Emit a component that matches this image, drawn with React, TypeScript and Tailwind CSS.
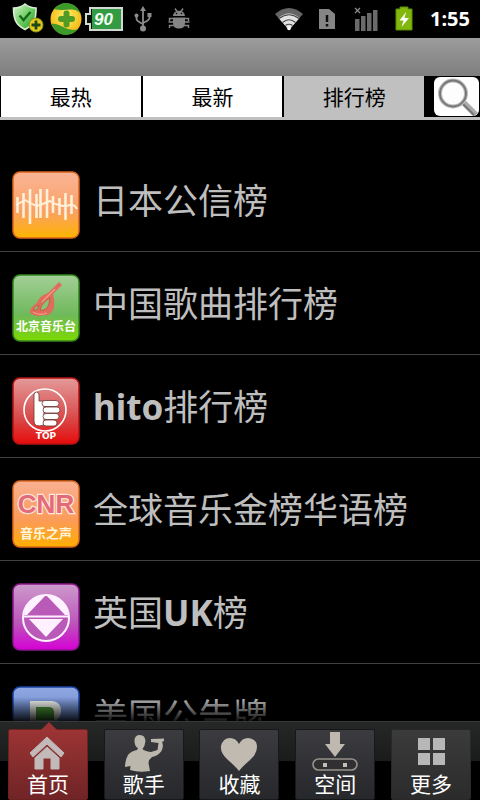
import { useState, type ReactNode } from "react";

const sans = "font-['Noto_Sans','Noto_Sans_CJK_SC',sans-serif]";

function StatusBar() {
  return (
    <header className="flex h-[38px] shrink-0 items-center justify-between bg-black pr-2.5 pl-3">
      <div className="flex items-center">
        <svg width="32" height="32" viewBox="0 0 32 32" aria-hidden="true">
          <defs>
            <linearGradient id="shield" x1="0" y1="0" x2="1" y2="1">
              <stop offset="0" stopColor="#d6f5cf" />
              <stop offset="0.5" stopColor="#6fce62" />
              <stop offset="1" stopColor="#259a28" />
            </linearGradient>
          </defs>
          <path d="M13 1C10 3.500 5 5 1.500 5C1.500 15 3 21.500 13 26.500C22 21.500 24.500 15 24 5C20 5 16 3.500 13 1Z" fill="url(#shield)" stroke="#d9eed5" strokeWidth="1.600" />
          <path d="M7.500 12.500l4 4.500l7-8" fill="none" stroke="#166b1c" strokeWidth="2.500" />
          <circle cx="24" cy="22" r="7" fill="#e9c81e" stroke="#79921e" />
          <path d="M24 17.500v9M19.500 22h9" stroke="#1c4a12" strokeWidth="2.800" />
        </svg>
        <svg className="ml-1.5" width="32" height="34" viewBox="0 0 32 34" aria-hidden="true">
          <defs>
            <radialGradient id="gold" cx="0.5" cy="0.4" r="0.6">
              <stop offset="0" stopColor="#fff36a" />
              <stop offset="1" stopColor="#f2b40c" />
            </radialGradient>
          </defs>
          <circle cx="16" cy="17" r="15.500" fill="url(#gold)" />
          <path d="M4 7C12-3 27 0 30.500 12C25 4 16 10 4 7Z" fill="#3c9a2b" />
          <path d="M1.500 22C6 35 21 36 28 27C18 31 9 20 1.500 22Z" fill="#3c9a2b" />
          <path d="M16.500 11.500v11M11 17h11" stroke="#4f9b25" strokeWidth="6" strokeLinecap="round" />
        </svg>
        <svg className="ml-0.5" width="40" height="26" viewBox="0 0 40 26" aria-label="90">
          <path d="M6 2H38V24H6V18H2V8H6Z" fill="#329b43" stroke="#d2d8d2" strokeWidth="2" />
          <path d="M6 3V8H2V18H6V23H8V3Z" fill="#061006" />
          <path d="M6 2V8H2V18H6V24" fill="none" stroke="#d2d8d2" strokeWidth="2" />
          <text x="10" y="19" fontSize="17" fontStyle="italic" fontWeight="bold" fill="#f3fff3" className="font-['Liberation_Sans',sans-serif]">90</text>
        </svg>
        <svg className="ml-2.5" width="18" height="26" viewBox="0 0 18 26" aria-hidden="true">
          <g fill="none" stroke="#8c8c8c" strokeWidth="1.800">
            <path d="M9 4v18M2.500 10v3q0 2 6.500 5M15.500 9v3q0 2-6.500 5" />
          </g>
          <path d="M9 0l3 5h-6zM13.500 7h4v4h-4z" fill="#8c8c8c" />
          <circle cx="2.500" cy="9.500" r="2" fill="#8c8c8c" />
          <circle cx="9" cy="22.500" r="3" fill="#8c8c8c" />
        </svg>
        <svg className="ml-4" width="22" height="22" viewBox="0 0 22 22" aria-hidden="true">
          <path d="M7 0.500l2 3M15 0.500l-2 3M1.500 13V10.500H5M20.500 13V10.500H17M0.500 14h4.500M17 14h4.500M1.500 20V17.500H6M20.500 20V17.500H16" stroke="#858585" strokeWidth="1.400" fill="none" />
          <path d="M5 8C5.500 1 16.500 1 17 8ZM5 9.500H17V15Q17 20.500 11 20.500T5 15Z" fill="#858585" />
          <circle cx="8.500" cy="5.500" r="0.800" fill="#000" />
          <circle cx="13.500" cy="5.500" r="0.800" fill="#000" />
        </svg>
      </div>
      <div className="flex items-center">
        <svg width="30" height="24" viewBox="0 0 30 24" aria-hidden="true">
          <path d="M1 7Q15-5 29 7L15 23Z" fill="#656565" />
          <path d="M4.500 11Q15 2 25.500 11L15 23Z" fill="#e2e2e2" />
          <path d="M5 11.500Q15 4 25 11.500M8.500 15.500Q15 10 21.500 15.500M11.500 18.500Q15 16 18.500 18.500" fill="none" stroke="#444" strokeWidth="1.100" />
          <circle cx="15" cy="21.500" r="1.800" fill="#fff" />
        </svg>
        <svg className="ml-3.5" width="18" height="22" viewBox="0 0 18 22" aria-hidden="true">
          <path d="M1 1H11L17 6V21H1Z" fill="#858585" />
          <path d="M9 7v7M9 16v2.500" stroke="#101010" strokeWidth="2.500" />
        </svg>
        <svg className="ml-4.5" width="24" height="24" viewBox="0 0 24 24" aria-hidden="true">
          <path d="M1 12h4.500v12H1zM7 9h4.500v15H7zM13 6h4.500v18H13zM19 3h4.500v21H19z" fill="#6a6a6a" />
          <path d="M1 1l5 5M6 1l-5 5" stroke="#8a8a8a" strokeWidth="1.300" />
        </svg>
        <svg className="ml-4" width="20" height="26" viewBox="0 0 20 26" aria-hidden="true">
          <path d="M2 3H6V1H14V3H18V24H2Z" fill="#82b80d" stroke="#5c8c08" />
          <path d="M12 6L5.500 14.500H9.500L7.500 21L15 12H10.500Z" fill="#fff" />
        </svg>
        <time className="ml-4 text-xl leading-6 font-bold text-white">1:55</time>
      </div>
    </header>
  );
}

function Tile({ id, edge, top, middle, bottom, children }: { id: string; edge: string; top: string; middle: string; bottom: string; children: ReactNode }) {
  return (
    <svg className="mt-[22px] shrink-0" width="68" height="68" viewBox="0 0 68 68" aria-hidden="true">
      <defs>
        <linearGradient id={id} x1="0" y1="0" x2="0" y2="1">
          <stop offset="0" stopColor={top} />
          <stop offset="0.6" stopColor={middle} />
          <stop offset="1" stopColor={bottom} />
        </linearGradient>
      </defs>
      <rect x="1" y="1" width="66" height="66" rx="7" fill={`url(#${id})`} stroke={edge} strokeWidth="1.500" />
      {children}
    </svg>
  );
}

const cjk = "font-['Noto_Sans_CJK_SC',sans-serif]";

const charts: { name: ReactNode; icon: ReactNode }[] = [
  {
    name: "日本公信榜",
    icon: (
      <Tile id="t1" edge="#d9641c" top="#f9b596" middle="#fba064" bottom="#fdb500">
        <path d="M5.500 26v16M11.500 22v25M18 18v35M24.500 23v24M28.500 18v29M35 18v29M41 25v17M47.500 27v17M53.500 22v27M59.500 24v19" stroke="#fff0d8" strokeWidth="2.600" />
        <path d="M4 34Q8 32 13 29Q19 33 25 35Q31 33 38 30Q42 33 47 34Q52 36 58 34Q62 33 65 38" stroke="#fff0d8" strokeWidth="2" fill="none" />
      </Tile>
    ),
  },
  {
    name: "中国歌曲排行榜",
    icon: (
      <Tile id="t2" edge="#35861f" top="#a3cf98" middle="#6fb95b" bottom="#7cd900">
        <path d="M47 8L50 11L41 20Q43 27 42 34Q38 43 31 41Q25 44 18 39Q17 34 25 29Q27 22 36 19Z" fill="#e06c5c" />
        <path d="M38 24Q30 28 28 36Q37 38 38 24ZM21 36Q24 31 27 31L25 36Z" fill="#88c276" stroke="#c94e3e" strokeWidth="0.800" />
        <path d="M21 38Q27 42 35 39M30 28L43 15" stroke="#f49a86" strokeWidth="1.200" fill="none" />
        <text x="34" y="57" textAnchor="middle" fontSize="12" fontWeight="bold" fill="#fff" className={cjk}>北京音乐台</text>
      </Tile>
    ),
  },
  {
    name: <><b>hito</b>排行榜</>,
    icon: (
      <Tile id="t3" edge="#b51212" top="#e49a9a" middle="#d94b4b" bottom="#e60b0b">
        <circle cx="33" cy="33" r="21" fill="none" stroke="#fff" strokeWidth="1.600" />
        <path d="M22 18Q22 15 24.500 15Q27 15 27 18V24H32V48Q22 51 22 44Z" fill="#fff" stroke="#6d3535" strokeWidth="0.800" />
        <g fill="#fff" stroke="#6d3535" strokeWidth="0.800">
          <rect x="30" y="23.500" width="17" height="6" rx="3" />
          <rect x="31" y="30" width="17" height="6" rx="3" />
          <rect x="31" y="36.500" width="16" height="6" rx="3" />
          <rect x="31" y="43" width="14" height="6" rx="3" />
        </g>
        <text x="34" y="62" textAnchor="middle" fontSize="9" fontWeight="bold" fill="#fff" className="font-['DejaVu_Sans',sans-serif]">TOP</text>
      </Tile>
    ),
  },
  {
    name: "全球音乐金榜华语榜",
    icon: (
      <Tile id="t4" edge="#dc681c" top="#f9b092" middle="#fb9b58" bottom="#ffae00">
        <text x="34" y="33" textAnchor="middle" fontSize="26" fontWeight="bold" fill="#e56a78" stroke="#ffe6dc" strokeWidth="2.500" paintOrder="stroke" className="font-['Liberation_Sans',sans-serif]">CNR</text>
        <text x="34" y="58" textAnchor="middle" fontSize="13" fontWeight="bold" fill="#fff6d9" className={cjk}>音乐之声</text>
      </Tile>
    ),
  },
  {
    name: <>英国<b>UK</b>榜</>,
    icon: (
      <Tile id="t5" edge="#8c168c" top="#cd9acb" middle="#bb55b9" bottom="#d600d6">
        <circle cx="34" cy="35" r="23" fill="#b95ab8" stroke="#fff1ff" strokeWidth="2" />
        <path d="M12 32Q14 13 34 12Q54 13 56 32H53L34 12L15 32Z" fill="#fff1ff" />
        <path d="M11 32.500H57V34.500H11ZM17 36H51L34 54Z" fill="#fff1ff" />
      </Tile>
    ),
  },
  {
    name: "美国公告牌",
    icon: (
      <Tile id="t6" edge="#1746a5" top="#90a8e2" middle="#6687d0" bottom="#2459c8">
        <path d="M18 15H40Q50 16 49 27Q48 31 45 34Q51 38 49 47Q47 54 39 54H18Z" fill="#f4f7f2" />
        <path d="M24 21H37Q43 21 42 29V34H24Z" fill="#4c9a36" />
      </Tile>
    ),
  },
];

const tabs = ["最热", "最新", "排行榜"];

const navItems: { label: string; icon: ReactNode }[] = [
  {
    label: "首页",
    icon: (
      <>
        <path d="M19 1L36 17L33 21L19 8L5 21L2 17Z" fill="#c2b9b9" stroke="#c2b9b9" strokeLinejoin="round" />
        <path d="M19 11L31 22V33H23V22H15V33H7V22Z" fill="#c2b9b9" stroke="#c2b9b9" strokeLinejoin="round" />
      </>
    ),
  },
  {
    label: "歌手",
    icon: <path d="M10.500 6Q10-1 16-1Q21-1 21.500 5Q21 10 18.500 13Q20 15 27 16L33.500 14L34.500 7L27 6L27 3L40 2.500V5L38 6Q40 10 37.500 15Q34 20 28 21Q25 23 24.500 27L26 35Q15 37 6 34L6.500 30L1 31Q1 24 4 19Q7 15 13 14L14 12Q11 11 10.500 6Z" fill="#bcb7ad" />,
  },
  {
    label: "收藏",
    icon: <path d="M20 35Q17 31 9 24Q1 17 2 10Q4 2 11 2Q17 2 20 8Q23 2 29 2Q38 3 38 11Q38 18 31 24Q23 31 20 35Z" fill="#c0bab0" />,
  },
  {
    label: "空间",
    icon: (
      <>
        <path d="M15-4H25V8H30L20 21L10 8H15Z" fill="#beb8ae" />
        <rect x="-2" y="23" width="44" height="11" rx="5.500" fill="#303032" stroke="#969189" strokeWidth="1.600" />
        <path d="M8 27h4v4H8zM28 27h4v4h-4z" fill="#c5beb4" />
      </>
    ),
  },
  {
    label: "更多",
    icon: <path d="M7 2h12v12H7zM22 2h12v12H22zM7 17h12v12H7zM22 17h12v12H22z" fill="#b7b7b7" />,
  },
];

export default function App() {
  const [tab, setTab] = useState(2);
  const [page, setPage] = useState(0);
  return (
    <div className={`flex h-screen flex-col overflow-hidden bg-black ${sans}`}>
      <StatusBar />
      <div className="h-[38px] shrink-0 bg-linear-to-b from-[#9c9c9c] to-[#7e7e7e]" />
      <div className="flex h-11 shrink-0 border-b-3 border-[#c0c0c0] px-px">
        <div className="flex flex-1 gap-0.5" role="tablist">
          {tabs.map((label, i) => (
            <button
              key={label}
              role="tab"
              aria-selected={tab === i}
              onClick={() => setTab(i)}
              className={`flex-1 pt-px text-[21px] leading-6 text-black ${tab === i ? "bg-[#c0c0c0]" : "bg-white"}`}
            >
              {label}
            </button>
          ))}
        </div>
        <button aria-label="搜索" className="my-px ml-2.5 flex w-[45px] items-center justify-center rounded-md bg-white">
          <svg width="44" height="38" viewBox="0 0 44 38" aria-hidden="true">
            <path d="M29 25L41 37" stroke="#aaa" strokeWidth="6" />
            <path d="M28 26L39 37" stroke="#777" strokeWidth="2" />
            <circle cx="18" cy="15.500" r="13" fill="#fdfdfd" stroke="#b8b8b8" strokeWidth="4" />
            <circle cx="18" cy="15.500" r="13" fill="none" stroke="#777" strokeWidth="1.800" />
          </svg>
        </button>
      </div>
      <main className="relative min-h-0 flex-1 overflow-hidden pt-[29px]">
        <ul>
          {charts.map((chart, i) => (
            <li key={i} className="h-[103px] border-b border-[#404040]">
              <button className="flex w-full items-start gap-[13px] pl-3 text-left">
                {chart.icon}
                <span className="pt-7 text-[35px] leading-12 text-[#bebebe]">{chart.name}</span>
              </button>
            </li>
          ))}
        </ul>
        <div className="pointer-events-none absolute inset-x-0 bottom-0 h-6 bg-linear-to-b from-transparent to-black/90" />
      </main>
      <nav className="grid h-[79px] shrink-0 grid-cols-5 justify-items-center border-t border-[#363837] bg-linear-to-b from-[#262827] from-0% via-[#191c1b] via-50% to-black to-51% pt-[7px] pr-px">
        {navItems.map((item, i) => (
          <button
            key={item.label}
            onClick={() => setPage(i)}
            className={`relative flex h-[71px] w-20 flex-col items-center rounded-xs border pt-1.5 text-[21px] leading-6 text-white ${
              page === i
                ? "border-[#6c2020] bg-linear-to-b from-[#9c3434] to-[#702426]"
                : i === 4
                  ? "border-[#292929] bg-linear-to-b from-[#3b3b3b] to-[#2b2b2b]"
                  : "border-[#17181a] bg-linear-to-b from-[#3b3b40] to-[#27282b]"
            }`}
          >
            {page === i && (
              <svg className="absolute -top-2 left-8" width="16" height="8" viewBox="0 0 16 8" aria-hidden="true">
                <path d="M0 8L8 0L16 8Z" fill="#9c3434" />
              </svg>
            )}
            <svg className="shrink-0 overflow-visible" width="40" height="36" viewBox="0 0 40 36" aria-hidden="true">
              {item.icon}
            </svg>
            {item.label}
          </button>
        ))}
      </nav>
    </div>
  );
}
